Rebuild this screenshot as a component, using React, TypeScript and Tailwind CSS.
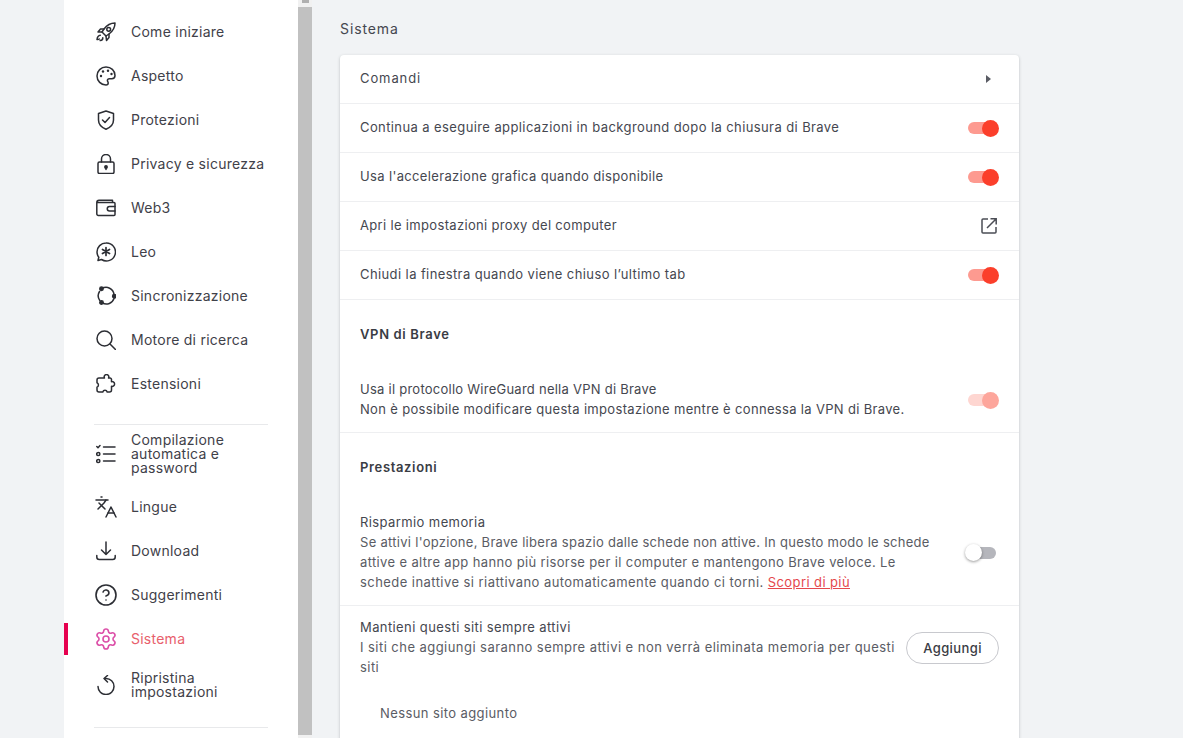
import { Languages, CircleHelp, Settings } from 'lucide-react'
import type { ReactNode } from 'react'

function Ico({ children }: { children: ReactNode }) {
  return (
    <svg width="20" height="20" viewBox="0 0 20 20" fill="none" stroke="currentColor" strokeWidth="1.5" strokeLinecap="round" strokeLinejoin="round">
      {children}
    </svg>
  )
}

const RocketIcon = (
  <Ico>
    <path d="M19 1C14.500 1 11 3 8 7L6 10l4 4 3-2c4-3 6-6.500 6-11z" />
    <circle cx="12.700" cy="7.300" r="1.900" />
    <path d="M8 7H4.500L2 10h4M13 12v3.500L10.500 18.500 10 14" />
    <path d="M4.300 13.300c-2 .2-3 2-3.300 4.200 1 .2 1.800-.1 2.300-.5M6.800 15.700c.1 1.400-.8 2.600-2.600 2.900" />
  </Ico>
)

const PaletteIcon = (
  <Ico>
    <path d="M10 1a9 9 0 0 0 0 18c1.500 0 2.200-1 2.200-2 0-1.100-.8-1.500-.8-2.500s.9-1.800 2-1.800h2.400c2 0 3.200-1.500 3.200-3.200C19 4.500 15 1 10 1z" />
    <circle cx="5" cy="10" r="1.200" fill="currentColor" stroke="none" />
    <circle cx="7" cy="5.500" r="1.200" fill="currentColor" stroke="none" />
    <circle cx="12" cy="4.800" r="1.200" fill="currentColor" stroke="none" />
    <circle cx="15.500" cy="8" r="1.200" fill="currentColor" stroke="none" />
  </Ico>
)

const ShieldIcon = (
  <Ico>
    <path d="M10 1l7.500 2.500V10c0 4.500-3.300 7.500-7.500 9.200C5.800 17.500 2.500 14.500 2.500 10V3.500z" />
    <path d="M6.500 10l2.500 2.500 4.500-5" />
  </Ico>
)

const LockIcon = (
  <Ico>
    <rect x="2" y="8" width="16" height="11.500" rx="1.500" />
    <path d="M5.500 8V5a4.500 4.500 0 0 1 9 0v3" />
    <circle cx="10" cy="13" r="1.200" fill="currentColor" />
    <path d="M10 13v2.500" />
  </Ico>
)

const WalletIcon = (
  <Ico>
    <path d="M.8 4.500V16A1.500 1.500 0 0 0 2.300 17.500H18a1 1 0 0 0 1-1v-11a1 1 0 0 0-1-1H.8zM.8 4.500C.8 3 2 2.300 3 2.300h13.500v2.200" />
    <path d="M19 8.500h-5.500a2.200 2.200 0 0 0 0 4.500H19" />
  </Ico>
)

const LeoIcon = (
  <Ico>
    <path d="M10 1C5 1 1 5 1 10c0 2 .7 3.800 1.800 5.200L2 18.500l3.500-1A9 9 0 1 0 10 1z" />
    <path d="M10 5.500v8M6.500 7.500l7 4M13.500 7.500l-7 4" strokeWidth="1.700" />
  </Ico>
)

const SyncIcon = (
  <Ico>
    <path d="M6 2.500a8 8 0 0 1 12 6M18 12.500a8 8 0 0 1-11.500 4.500M3.800 14.500A8 8 0 0 1 3.500 5.500" />
    <circle cx="5.500" cy="2.800" r="1.700" fill="currentColor" />
    <circle cx="18.300" cy="10.300" r="1.700" fill="currentColor" />
    <circle cx="5.500" cy="16.500" r="1.700" fill="currentColor" />
  </Ico>
)

const SearchIcon = (
  <Ico>
    <circle cx="8.500" cy="8.500" r="7.500" />
    <path d="M14 14l5.500 5.500" />
  </Ico>
)

const PuzzleIcon = (
  <Ico>
    <path d="M6.500 4h2a2.300 2.300 0 1 1 4 0H14a1.500 1.500 0 0 1 1.500 1.500v2.200a2.400 2.400 0 1 1 0 4.600V16a2 2 0 0 1-2 2h-2.300a2.300 2.300 0 0 0-4.400 0H3a2 2 0 0 1-2-2v-2.800a2.400 2.400 0 0 0 0-4.400V6a2 2 0 0 1 2-2h3.500z" />
  </Ico>
)

const AutofillIcon = (
  <Ico>
    <path d="M7.500 3H19M7.500 10H19M7.500 17H19" />
    <path d="M.8 2.500L2 3.800l2-2.300" />
    <circle cx="2.300" cy="10" r="1.600" />
    <circle cx="2.300" cy="17" r="1.600" />
  </Ico>
)

const DownloadIcon = (
  <Ico>
    <path d="M10 1v12.500M5.500 9l4.500 4.500L14.500 9" />
    <path d="M.8 14.500V16a2.500 2.500 0 0 0 2.500 2.500h13.400a2.500 2.500 0 0 0 2.500-2.500v-1.500" />
  </Ico>
)

const ResetIcon = (
  <Ico>
    <path d="M9 3.500h1a8 8 0 1 1-8 8" />
    <path d="M11.500.5L8 3.500 11.500 7" />
  </Ico>
)

const navTop: { label: string; icon: ReactNode }[] = [
  { label: 'Come iniziare', icon: RocketIcon },
  { label: 'Aspetto', icon: PaletteIcon },
  { label: 'Protezioni', icon: ShieldIcon },
  { label: 'Privacy e sicurezza', icon: LockIcon },
  { label: 'Web3', icon: WalletIcon },
  { label: 'Leo', icon: LeoIcon },
  { label: 'Sincronizzazione', icon: SyncIcon },
  { label: 'Motore di ricerca', icon: SearchIcon },
  { label: 'Estensioni', icon: PuzzleIcon },
]

function NavIcon({ children, active }: { children: ReactNode; active?: boolean }) {
  return (
    <span className={`flex w-5 shrink-0 justify-center [&>svg]:shrink-0 ${active ? 'text-[#dc4fa8]' : 'text-[#2c2e34]'}`}>
      {children}
    </span>
  )
}

function NavItem({ label, icon, active }: { label: string; icon: ReactNode; active?: boolean }) {
  return (
    <div className={`relative flex h-11 items-center gap-[15px] pl-8 ${active ? 'text-[#e8606c]' : 'text-[#3f4149]'}`}>
      {active && <div className="absolute left-0 top-1.5 h-8 w-1 bg-[#e6004f]" />}
      <NavIcon active={active}>{icon}</NavIcon>
      <span className="text-[14px] leading-[14px] tracking-[0.25px]">{label}</span>
    </div>
  )
}

function Toggle({ state }: { state: 'on' | 'off' | 'disabled' }) {
  if (state === 'off') {
    return (
      <div className="relative mt-[2px] h-3 w-[28px] shrink-0 -translate-x-[3px] rounded-full bg-[#b5b6bc]">
        <div className="absolute -left-[3px] -top-[2.5px] h-[17px] w-[17px] rounded-full bg-white shadow-[0_1px_3px_rgba(0,0,0,0.4)]" />
      </div>
    )
  }
  const disabled = state === 'disabled'
  return (
    <div className={`relative h-3 w-[28px] shrink-0 -translate-x-[3px] rounded-full ${disabled ? 'mt-[2px] bg-[#fed6d1]' : 'bg-[#fd9a90]'}`}>
      <div className={`absolute -right-[3px] -top-[2.5px] h-[17px] w-[17px] rounded-full ${disabled ? 'bg-[#fda69c]' : 'bg-[#fb3f2b]'}`} />
    </div>
  )
}

function Row({ children, right }: { children: ReactNode; right?: ReactNode }) {
  return (
    <div className="flex h-[49px] items-center justify-between border-b border-[#eeeff1] px-5 text-[#45474f]">
      <span>{children}</span>
      {right}
    </div>
  )
}

export default function App() {
  return (
    <div className="flex h-[738px] overflow-hidden bg-[#f1f3f5] [font-family:Inter,sans-serif]">
      {/* Sidebar */}
      <aside className="ml-16 h-full w-[234px] shrink-0 bg-white pt-[10px]">
        {navTop.map(item => (
          <NavItem key={item.label} {...item} />
        ))}
        <div className="mx-[30px] mt-[18px] border-t border-[#e8e9eb]" />
        <div className="flex h-[58px] items-center gap-[15px] pl-8 pb-[1px] text-[#3f4149]">
          <NavIcon>{AutofillIcon}</NavIcon>
          <span className="text-[14px] leading-[14px] tracking-[0.25px]">Compilazione<br />automatica e<br />password</span>
        </div>
        <div className="h-[2px]" />
        <NavItem label="Lingue" icon={<Languages size={24} strokeWidth={1.5} />} />
        <NavItem label="Download" icon={DownloadIcon} />
        <NavItem label="Suggerimenti" icon={<CircleHelp size={24} strokeWidth={1.6} />} />
        <NavItem label="Sistema" active icon={<Settings size={24} strokeWidth={1.6} />} />
        <div className="flex h-[48px] items-center gap-[15px] pl-8 text-[#3f4149]">
          <NavIcon>{ResetIcon}</NavIcon>
          <span className="text-[14px] leading-[14px] tracking-[0.25px]">Ripristina<br />impostazioni</span>
        </div>
        <div className="mx-[30px] mt-[18px] border-t border-[#e8e9eb]" />
      </aside>

      {/* Scrollbar */}
      <div className="flex h-full w-[14px] shrink-0 flex-col bg-[#f1f1f1]">
        <div className="flex h-[7px] justify-center"><div className="h-[3px] w-[7px] bg-[#b0b0b0]" /></div>
        <div className="mb-[3px] flex-1 bg-[#c1c1c1]" />
      </div>

      {/* Main */}
      <main className="ml-7 w-[679px] shrink-0 text-[13px] tracking-[0.4px]">
        <h1 className="flex h-[55px] items-center pt-[1px] text-[14px] font-normal tracking-[0.9px] text-[#45474f]">Sistema</h1>
        <div className="h-[690px] rounded-[4px] bg-white shadow-[0_1px_3px_rgba(60,64,67,0.3)]">
          <Row right={<span className="mr-[8px] h-0 w-0 border-y-4 border-l-[5px] border-y-transparent border-l-[#5a5c64]" />}><span className="tracking-[0.9px]">Comandi</span></Row>
          <Row right={<Toggle state="on" />}>Continua a eseguire applicazioni in background dopo la chiusura di Brave</Row>
          <Row right={<Toggle state="on" />}><span className="tracking-[0.35px]">Usa l'accelerazione grafica quando disponibile</span></Row>
          <Row right={
            <svg className="mr-[1px]" width="18" height="18" viewBox="0 0 18 18" fill="none" stroke="#4b4d55" strokeWidth="1.5">
              <path d="M8 2H3a1 1 0 0 0-1 1v12a1 1 0 0 0 1 1h12a1 1 0 0 0 1-1v-5" />
              <path d="M7 11l9-9M10.500 1.800h5.700v5.700" />
            </svg>
          }><span className="tracking-[0.33px]">Apri le impostazioni proxy del computer</span></Row>
          <Row right={<Toggle state="on" />}>Chiudi la finestra quando viene chiuso l’ultimo tab</Row>

          <div className="flex h-[70px] items-center pl-5 font-semibold tracking-[0.65px] text-[#3a3c44]">VPN di Brave</div>
          <div className="flex h-[63px] items-center justify-between border-b border-[#eeeff1] px-5 pb-[4px] leading-[20px] text-[#45474f]">
            <span className="whitespace-nowrap">
              <span className="tracking-[0.25px]">Usa il protocollo WireGuard nella VPN di Brave</span><br />
              <span className="tracking-[0.33px]">Non è possibile modificare questa impostazione mentre è connessa la VPN di Brave.</span>
            </span>
            <Toggle state="disabled" />
          </div>

          <div className="flex h-[69px] items-center pl-5 font-semibold tracking-[0.65px] text-[#3a3c44]">Prestazioni</div>
          <div className="flex h-[104px] items-center justify-between border-b border-[#eeeff1] px-5 pb-[4px] leading-[20px] text-[#45474f]">
            <div className="whitespace-nowrap">
              <div>Risparmio memoria</div>
              <div className="text-[#5a5c64]">
                <span className="tracking-[0.29px]">Se attivi l'opzione, Brave libera spazio dalle schede non attive. In questo modo le schede</span><br />
                <span className="tracking-[0.36px]">attive e altre app hanno più risorse per il computer e mantengono Brave veloce. Le</span><br />
                <span className="tracking-[0.44px]">schede inattive si riattivano automaticamente quando ci torni.</span>{' '}
                <span className="text-[#e5484d] underline">Scopri di più</span>
              </div>
            </div>
            <Toggle state="off" />
          </div>
          <div className="flex h-[84px] items-center justify-between px-5 leading-[20px] text-[#45474f]">
            <div className="-mt-[2px] w-[540px]">
              <div>Mantieni questi siti sempre attivi</div>
              <div className="tracking-[0.45px] text-[#5a5c64]">I siti che aggiungi saranno sempre attivi e non verrà eliminata memoria per questi siti</div>
            </div>
            <button className="flex h-8 w-[93px] items-center justify-center rounded-full border border-[#c8c9ce] bg-white font-medium text-[#3a3c44]">Aggiungi</button>
          </div>
          <div className="pl-10 pt-[14px] text-[#5a5c64]">Nessun sito aggiunto</div>
        </div>
      </main>
    </div>
  )
}
